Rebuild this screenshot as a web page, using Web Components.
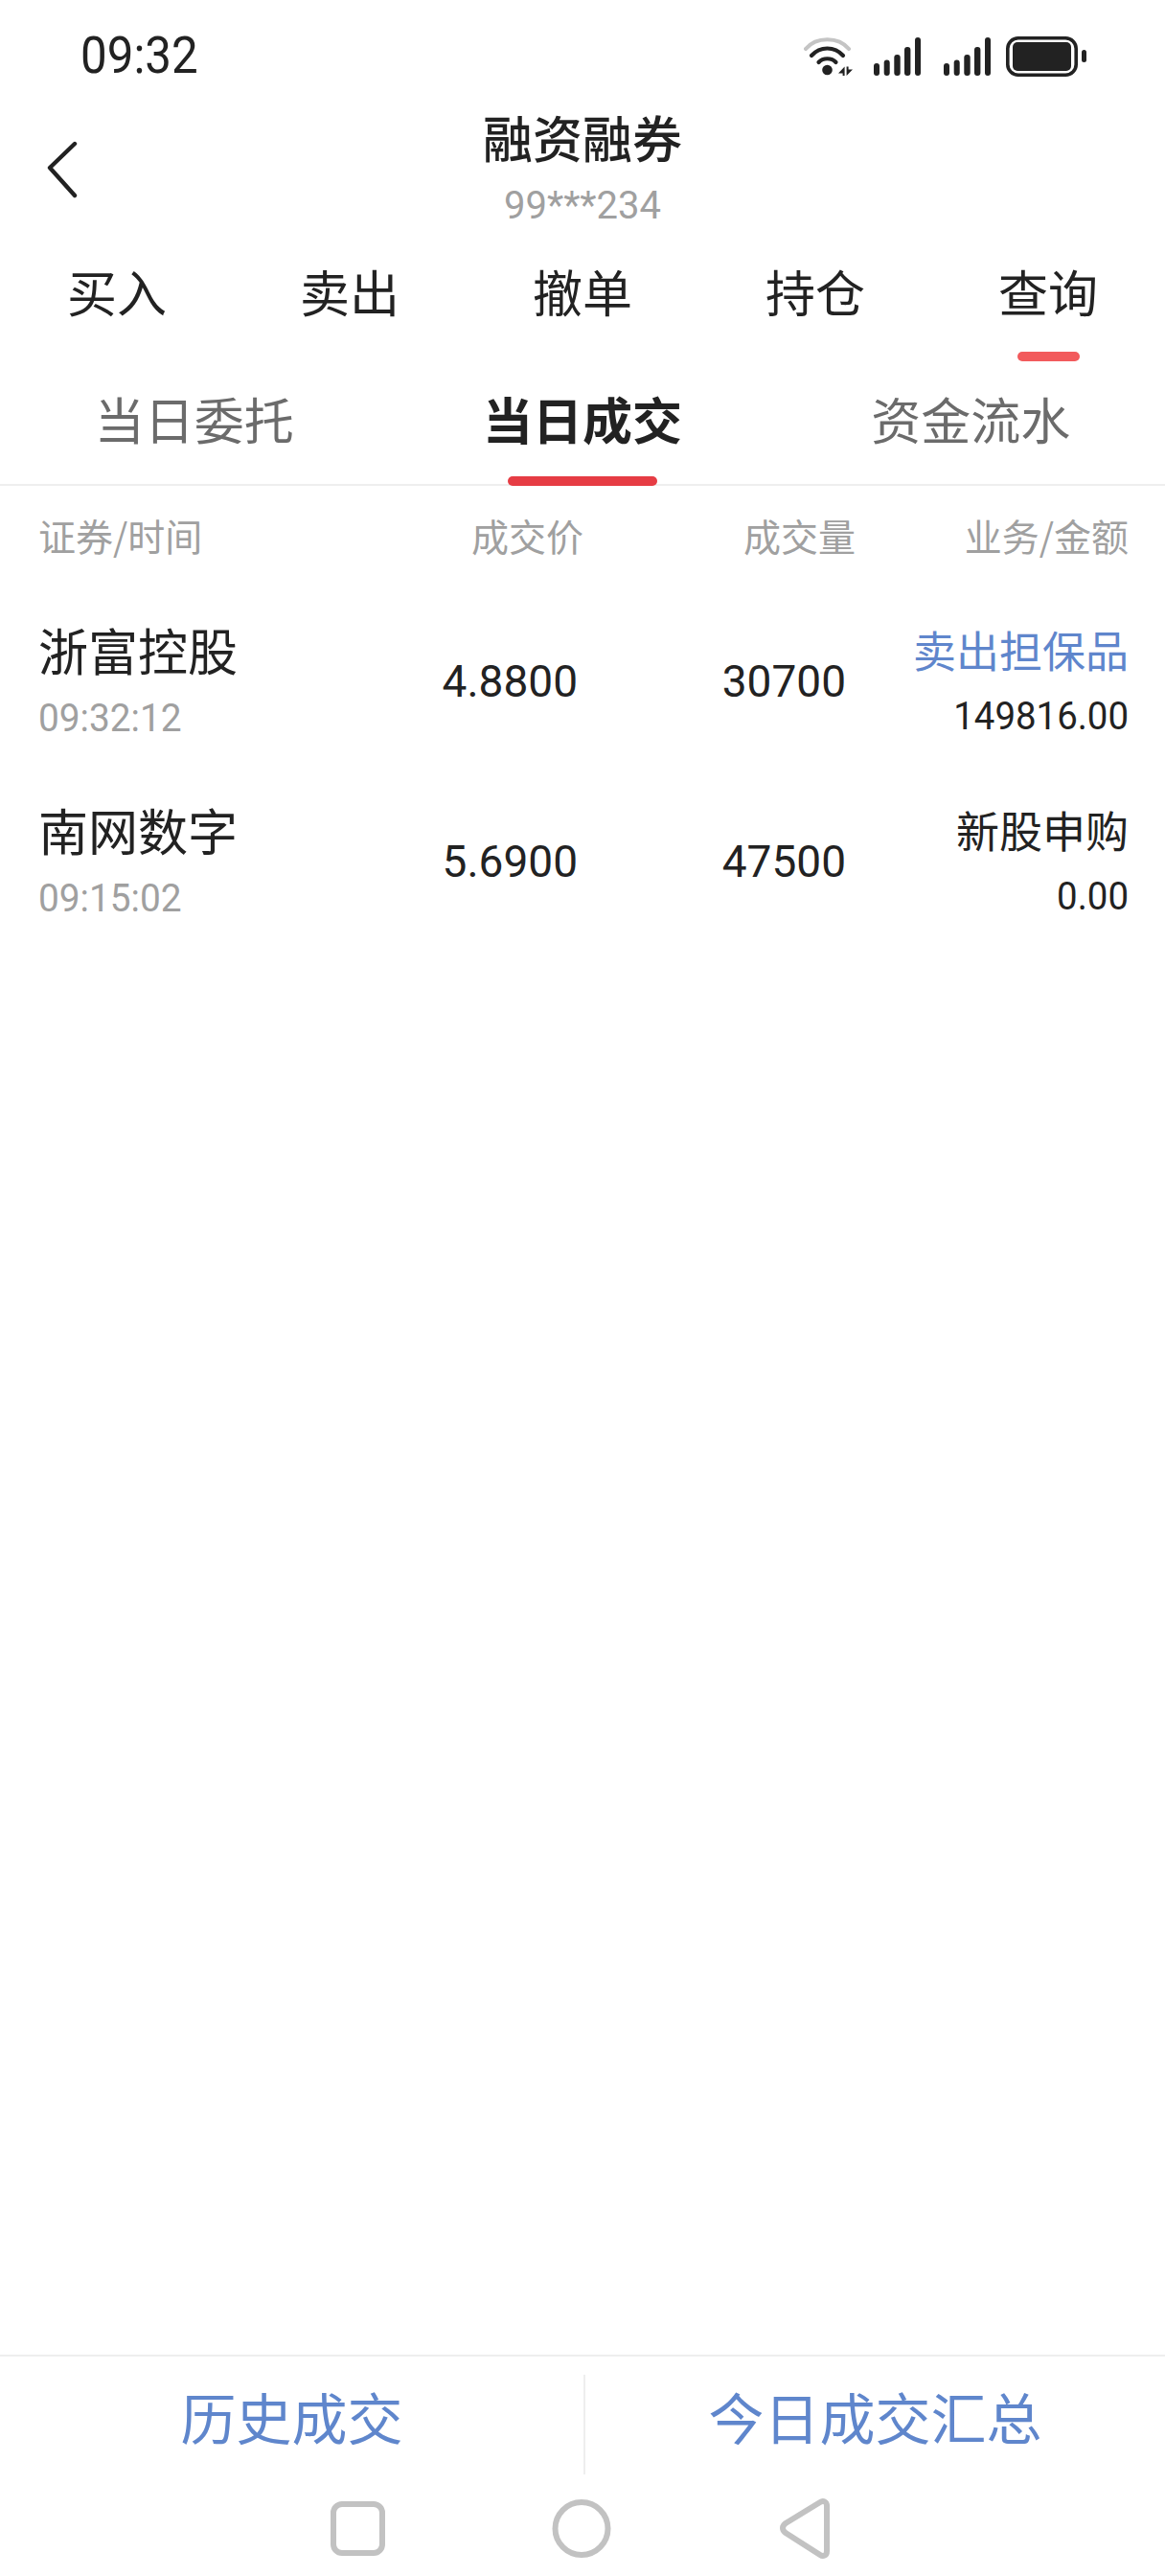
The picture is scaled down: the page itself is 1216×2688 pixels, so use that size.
<!DOCTYPE html>
<html lang="zh">
<head>
<meta charset="utf-8">
<style>
  html, body { margin: 0; height: 100%; background: #fff; }
  body { font-family: "Noto Sans CJK SC", "Noto Sans", sans-serif; }
</style>
</head>
<body>
<trade-page>
  <status-bar slot="status"></status-bar>
  <nav-header slot="header" subtitle="99***234">融资融券</nav-header>
  <main-tabs slot="tabs"></main-tabs>
  <sub-tabs slot="tabs"></sub-tabs>
  <table-head slot="list"></table-head>
  <trade-row slot="list" name="浙富控股" time="09:32:12" price="4.8800" volume="30700" kind="卖出担保品" amount="149816.00" accent></trade-row>
  <trade-row slot="list" name="南网数字" time="09:15:02" price="5.6900" volume="47500" kind="新股申购" amount="0.00"></trade-row>
  <bottom-actions slot="footer"></bottom-actions>
  <system-nav slot="footer"></system-nav>
</trade-page>

<script>
class TradePage extends HTMLElement {
  constructor() {
    super();
    this.attachShadow({ mode: 'open' }).innerHTML = `
      <style>
        :host { display: flex; flex-direction: column; width: 1216px; height: 2688px; color: #222; overflow: hidden; }
        .grow { flex: 1; }
      </style>
      <slot name="status"></slot>
      <slot name="header"></slot>
      <slot name="tabs"></slot>
      <div class="grow"><slot name="list"></slot></div>
      <slot name="footer"></slot>
    `;
  }
}

class StatusBar extends HTMLElement {
  constructor() {
    super();
    const bars = `<svg width="49" height="40" viewBox="0 0 49 40" fill="#222">
      <rect x="0" y="27" width="6" height="13" rx="3"/>
      <rect x="10.7" y="23.5" width="6" height="16.5" rx="3"/>
      <rect x="21.3" y="18" width="6.4" height="22" rx="3"/>
      <rect x="32" y="10" width="6.4" height="30" rx="3"/>
      <rect x="43" y="0" width="6" height="40" rx="3"/>
    </svg>`;
    this.attachShadow({ mode: 'open' }).innerHTML = `
      <style>
        :host { display: flex; align-items: flex-start; height: 110px; box-sizing: border-box; padding: 38px 82px 0 84px; }
        .time { font: 53px/40px Roboto, sans-serif; color: #222; flex: 1; transform: scaleX(.93); transform-origin: left; }
        .icons { display: flex; align-items: flex-start; }
        svg { display: block; }
      </style>
      <div class="time">09:32</div>
      <div class="icons">
        <svg style="margin:1px 22px 0 0" width="51" height="40" viewBox="0 0 51 40" fill="none" stroke-linecap="round">
          <path d="M2 12 C13 -1 36 -1 47 12" stroke="#c4c4c4" stroke-width="4.2"/>
          <path d="M8 19 C17 9 32 9 41 19" stroke="#222" stroke-width="4.2"/>
          <path d="M15.5 26 C20 21 29 21 33.5 26" stroke="#222" stroke-width="4.2"/>
          <circle cx="24.5" cy="34" r="5.3" fill="#222"/>
          <path d="M42.6 30.5 V40 H40.6 V37.5 H36 Z M44.6 40 V30.5 H46.6 V33.5 H51 Z" fill="#222"/>
        </svg>
        ${bars.replace('<svg ', '<svg style="margin:1px 24px 0 0" ')}
        ${bars.replace('<svg ', '<svg style="margin:1px 16px 0 0" ')}
        <svg width="84" height="42" viewBox="0 0 84 42">
          <rect x="1.8" y="1.8" width="71.4" height="38.4" rx="11" fill="none" stroke="#222" stroke-width="3.6"/>
          <rect x="7" y="6" width="61" height="30" rx="5" fill="#222"/>
          <rect x="79" y="14" width="5" height="13" rx="2.5" fill="#222"/>
        </svg>
      </div>
    `;
  }
}

class NavHeader extends HTMLElement {
  constructor() {
    super();
    this.attachShadow({ mode: 'open' }).innerHTML = `
      <style>
        :host { display: grid; grid-template-columns: 1fr auto 1fr; height: 142px; }
        svg { display: block; margin: 37px 0 0 48px; }
        .mid { text-align: center; margin-top: -2px; }
        .title { font-size: 52px; font-weight: 500; line-height: 70px; color: #222; }
        .sub { font: 40px/50px Roboto, sans-serif; color: #a0a0a0; margin-top: 12px; }
      </style>
      <div>
        <svg width="34" height="60" viewBox="0 0 34 60" fill="none" stroke="#222" stroke-width="4.4" stroke-linecap="round" stroke-linejoin="round">
          <path d="M30 3 L4 28 L30 57"/>
        </svg>
      </div>
      <div class="mid">
        <div class="title"><slot></slot></div>
        <div class="sub">${this.getAttribute('subtitle')}</div>
      </div>
      <div></div>
    `;
  }
}

class MainTabs extends HTMLElement {
  constructor() {
    super();
    const items = ['买入', '卖出', '撤单', '持仓', '查询'];
    this.attachShadow({ mode: 'open' }).innerHTML = `
      <style>
        :host { display: grid; grid-template-columns: repeat(5, 243px); justify-content: center; height: 128px; }
        div { font-size: 52px; line-height: 70px; padding-top: 17px; text-align: center; color: #222; display: flex; flex-direction: column; align-items: center; }
        i { display: block; width: 65px; height: 10px; border-radius: 5px; margin-top: 28px; }
        .on i { background: #f25a5c; }
      </style>
      ${items.map((t, i) => `<div class="${i === 4 ? 'on' : ''}">${t}<i></i></div>`).join('')}
    `;
  }
}

class SubTabs extends HTMLElement {
  constructor() {
    super();
    const items = ['当日委托', '当日成交', '资金流水'];
    this.attachShadow({ mode: 'open' }).innerHTML = `
      <style>
        :host { display: grid; grid-template-columns: repeat(3, 1fr); height: 127px; box-sizing: border-box; border-bottom: 2px solid #eee; }
        div { font-size: 52px; line-height: 70px; padding-top: 22px; text-align: center; color: #6b6b6b; display: flex; flex-direction: column; align-items: center; }
        .on { color: #222; font-weight: 700; }
        i { display: block; width: 156px; height: 10px; border-radius: 5px; margin-top: 25px; }
        .on i { background: #e63c44; }
      </style>
      ${items.map((t, i) => `<div class="${i === 1 ? 'on' : ''}">${t}<i></i></div>`).join('')}
    `;
  }
}

class TableHead extends HTMLElement {
  constructor() {
    super();
    this.attachShadow({ mode: 'open' }).innerHTML = `
      <style>
        :host { display: grid; grid-template-columns: 260px 309px 284px 1fr; padding: 0 38px 9px 40px; height: 110px; box-sizing: border-box; align-items: center; font-size: 39px; color: #a0a0a0; }
        .r { text-align: right; }
      </style>
      <div>证券/时间</div><div class="r">成交价</div><div class="r">成交量</div><div class="r">业务/金额</div>
    `;
  }
}

class TradeRow extends HTMLElement {
  constructor() {
    super();
    const a = n => this.getAttribute(n);
    this.attachShadow({ mode: 'open' }).innerHTML = `
      <style>
        :host { display: grid; grid-template-columns: 260px 309px 284px 1fr; padding: 0 38px 0 40px; height: 188px; align-items: center; }
        .left { padding-bottom: 4px; }
        .name { font-size: 52px; line-height: 70px; color: #222; white-space: nowrap; }
        .time { font: 40px/50px Roboto, sans-serif; color: #a0a0a0; margin-top: 12px; transform: scaleX(.97); transform-origin: left; }
        .num { font: 46px/60px Roboto, sans-serif; color: #222; text-align: right; }
        .price { margin-right: 6px; }
        .vol { margin-right: 10px; }
        .right { text-align: right; padding-bottom: 7px; }
        .kind { font-size: 45px; line-height: 70px; white-space: nowrap; color: ${this.hasAttribute('accent') ? '#5f86cc' : '#222'}; }
        .amt { font: 40px/50px Roboto, sans-serif; color: #222; margin-top: 10px; transform: scaleX(.96); transform-origin: right; }
      </style>
      <div class="left"><div class="name">${a('name')}</div><div class="time">${a('time')}</div></div>
      <div class="num price">${a('price')}</div>
      <div class="num vol">${a('volume')}</div>
      <div class="right"><div class="kind">${a('kind')}</div><div class="amt">${a('amount')}</div></div>
    `;
  }
}

class BottomActions extends HTMLElement {
  constructor() {
    super();
    this.attachShadow({ mode: 'open' }).innerHTML = `
      <style>
        :host { display: grid; grid-template-columns: 609px 1fr; box-sizing: border-box; height: 133px; padding: 19px 0 0; border-top: 2px solid #eee; font-size: 58px; color: #5f86cc; text-align: center; }
        div { height: 104px; line-height: 87px; }
        div + div { border-left: 2px solid #eee; }
      </style>
      <div>历史成交</div><div>今日成交汇总</div>
    `;
  }
}

class SystemNav extends HTMLElement {
  constructor() {
    super();
    this.attachShadow({ mode: 'open' }).innerHTML = `
      <style>
        :host { display: block; height: 98px; }
        svg { display: block; }
      </style>
      <svg width="1216" height="98" viewBox="0 0 1216 98" fill="none" stroke="#c2c2c2" stroke-width="6" stroke-linejoin="round">
        <rect x="348" y="23" width="51" height="51" rx="9"/>
        <ellipse cx="607" cy="48.5" rx="27.5" ry="27.5"/>
        <path d="M856 21 C859 19 863 20 863 25 L863 72 C863 77 859 78 856 76 L820 53 C816 50 816 46 820 43 Z"/>
      </svg>
    `;
  }
}

customElements.define('trade-page', TradePage);
customElements.define('status-bar', StatusBar);
customElements.define('nav-header', NavHeader);
customElements.define('main-tabs', MainTabs);
customElements.define('sub-tabs', SubTabs);
customElements.define('table-head', TableHead);
customElements.define('trade-row', TradeRow);
customElements.define('bottom-actions', BottomActions);
customElements.define('system-nav', SystemNav);
</script>
</body>
</html>
